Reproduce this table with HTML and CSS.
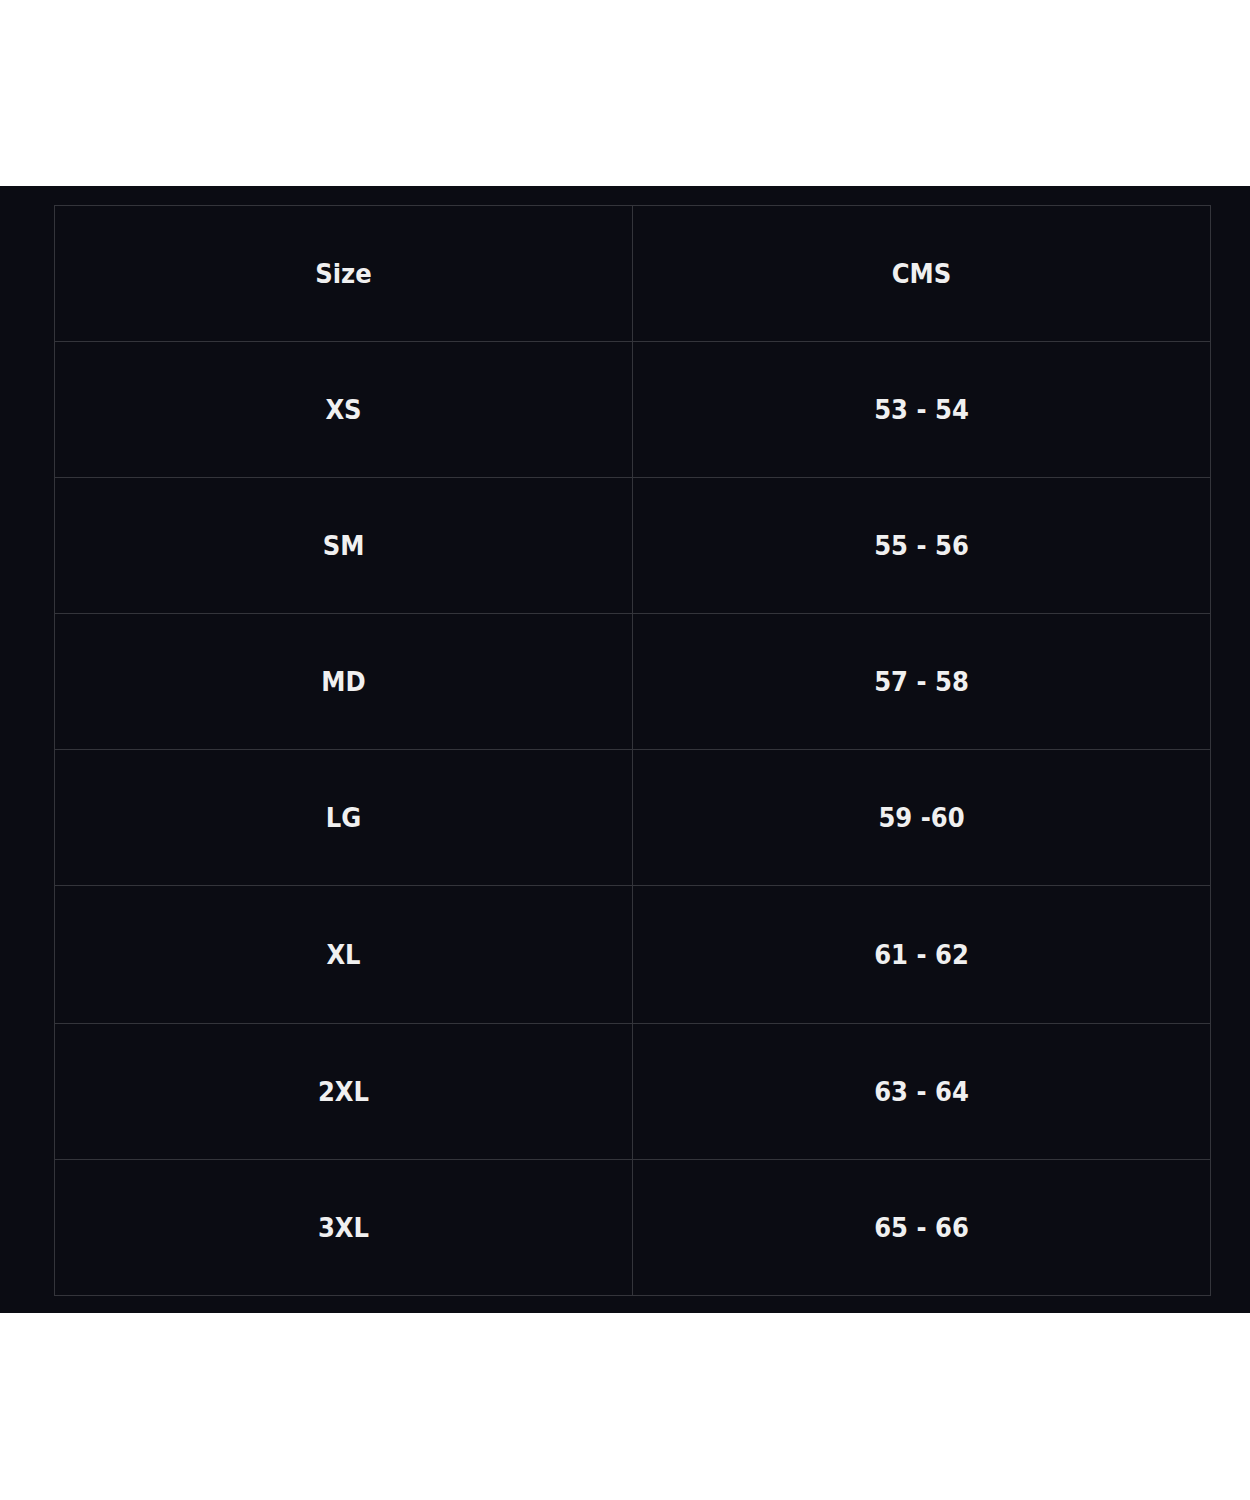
FILE: index.html
```html
<!DOCTYPE html>
<html>
<head>
<meta charset="utf-8">
<link rel="stylesheet" href="styles.css">
</head>
<body>
<div class="top-space"></div>
<section class="band">
  <table class="size-table">
    <tr><td>Size</td><td>CMS</td></tr>
    <tr><td>XS</td><td>53 - 54</td></tr>
    <tr><td>SM</td><td>55 - 56</td></tr>
    <tr><td>MD</td><td>57 - 58</td></tr>
    <tr><td>LG</td><td>59 -60</td></tr>
    <tr class="tall"><td>XL</td><td>61 - 62</td></tr>
    <tr><td>2XL</td><td>63 - 64</td></tr>
    <tr><td>3XL</td><td>65 - 66</td></tr>
  </table>
</section>
</body>
</html>
```
FILE: styles.css
```css
html, body {
  margin: 0;
  padding: 0;
  background: #ffffff;
}
.top-space {
  height: 186px;
}
.band {
  background: #0b0c13;
  padding: 19px 39px 17px 54px;
}
.size-table {
  width: 1157px;
  border-collapse: collapse;
  table-layout: fixed;
}
.size-table td {
  border: 1px solid #34353b;
  height: 135px;
  padding: 0;
  text-align: center;
  vertical-align: middle;
  color: #f0f0f0;
  font-family: "DejaVu Sans Condensed", "DejaVu Sans", sans-serif;
  font-size: 27px;
  font-weight: bold;
}
.size-table .tall td {
  height: 137px;
}
```
